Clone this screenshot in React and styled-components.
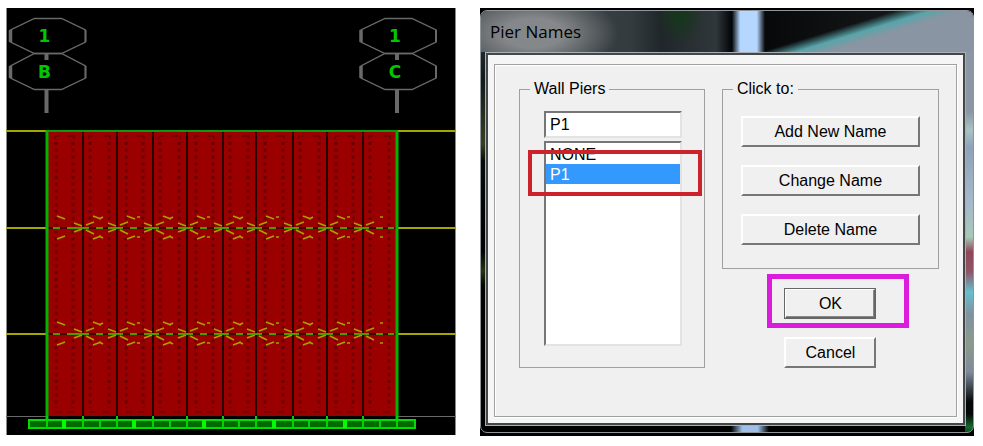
import { useState } from 'react';
import styled, { createGlobalStyle, css } from 'styled-components';

const columns = [47, 83, 117, 153, 187, 223, 256, 293, 327, 363, 397];
const levels = [228, 334];
const baseTicks = [47, 83, 100, 117, 153, 170, 187, 223, 239, 256, 293, 309, 327, 363, 380, 397];
const baseNodes = [64, 134, 204, 274, 345];

function GridBubble({ x, number, letter }) {
	return (
		<g transform={`translate(${x} 0)`}>
			<g fill="none" stroke="#696969" strokeWidth="1.3">
				<path d="M-12 18.5H15L39 30V42L15 53.5H-12L-36 42V30Z" />
				<path d="M-12 53.5H15L39 66V78L15 89.5H-12L-36 78V66Z" />
				<path d="M-36 30V42M-36 66V78" strokeWidth="3.5" />
				<path d="M39 30V42M39 66V78" strokeWidth="2" />
				<path d="M0 54V60M0 89V113" strokeWidth="4" />
			</g>
			<BubbleText x="-2" y="42">
				{number}
			</BubbleText>
			<BubbleText x="-2" y="78">
				{letter}
			</BubbleText>
		</g>
	);
}

function WallColumn({ left, right, index }) {
	const even = index % 2 === 0;
	const dotsLeft = left + (even ? 9 : 7);
	const dotsRight = right - (even ? 10 : 8);
	return (
		<g>
			<rect x={left + 1} y="131" width={right - left - 2} height="285" fill="#9a0000" />
			<path
				d={`M${dotsLeft} 142V408M${dotsRight} 142V408`}
				stroke="#6c0000"
				strokeWidth="3"
				strokeDasharray="3 3.8"
			/>
			<path
				d={`M${dotsLeft - 1} 139V136H${dotsLeft + 3}M${dotsRight - 6} 136H${dotsRight + 1}V139M${dotsLeft - 1} 412H${dotsLeft + 6}M${dotsRight - 6} 412H${dotsRight + 1}`}
				stroke="#6c0000"
				strokeWidth="1.5"
				fill="none"
			/>
		</g>
	);
}

function LevelMarks({ left, right, index, y }) {
	const first = index === 0;
	const last = index === columns.length - 2;
	const peak = left + 10;
	let marks = '';
	if (!first) {
		marks += `M${left + 3} ${y - 3}L${left + 11} ${y - 6}M${left + 3} ${y + 2}L${left + 11} ${y + 6}`;
	}
	if (!last) {
		marks += `M${right - 9} ${y - 5}L${right - 1} ${y - 2}M${right - 9} ${y + 4}L${right - 1} ${y + 1}`;
		marks += `M${peak} ${y - 12}L${peak + 8} ${y - 9}M${peak} ${y + 11}L${peak + 8} ${y + 8}`;
	}
	if (!first && !last && index % 2 === 1) {
		marks += `M${peak + 6} ${y - 9}L${peak + 10} ${y - 11}M${peak + 6} ${y + 8}L${peak + 10} ${y + 10}`;
	}
	if (last || (!first && !(index % 2))) {
		const dot = last ? left + 17 : peak + 10;
		marks += `M${dot} ${y - 11}h3M${dot} ${y + 9}h3`;
	}
	return <path d={marks} stroke="#a7a000" strokeWidth="1.7" fill="none" />;
}

function Elevation() {
	const spans = columns.slice(0, -1).map((left, i) => ({ left, right: columns[i + 1] }));
	return (
		<Plot viewBox="6 8 450 427" role="img" aria-label="Wall elevation">
			<rect x="6" y="8" width="450" height="427" fill="#000" />
			<path d="M6.5 435V8M455.5 8V435" stroke="#8a8a8a" />
			<GridBubble x={46.5} number="1" letter="B" />
			<GridBubble x={397} number="1" letter="C" />
			<rect x="47" y="131" width="350" height="285" fill="#270000" />
			{spans.map((span, i) => (
				<WallColumn key={span.left} {...span} index={i} />
			))}
			{levels.map((y) => (
				<g key={y}>
					<path d={`M47 ${y}H397`} stroke="#450000" strokeWidth="2" />
					<path d={`M6 ${y}H47M397 ${y}H456`} stroke="#a5a500" strokeWidth="2" />
					{spans.map(({ left, right }, i) => (
						<g key={left}>
							<path
								d={`M${left - (i ? 3 : -6)} ${y}H${left + (i ? 6 : 13)}M${left + (i ? 13 : 20)} ${y}h7M${right - 9} ${y}h6`}
								stroke="#4a9a00"
								strokeWidth="2"
							/>
							<LevelMarks left={left} right={right} index={i} y={y} />
						</g>
					))}
				</g>
			))}
			<path d="M6 131H47M397 131H456" stroke="#a5a500" strokeWidth="2" />
			<path d="M6 416.5H47M397 416.5H456" stroke="#696969" />
			<path d="M47 420V131H397V420" stroke="#0a9c0a" strokeWidth="2" fill="none" />
			<path d="M47 420V131M397 131V420" stroke="#00b400" strokeWidth="3" />
			<rect x="29" y="420" width="386" height="8" fill="#006c00" stroke="#00dc00" strokeWidth="2" />
			{baseTicks.map((x) => (
				<path key={x} d={`M${x} ${columns.includes(x) ? 416 : 420}V428`} stroke="#00d200" strokeWidth="2" />
			))}
			{baseNodes.map((x) => (
				<path key={x} d={`M${x} 420V428`} stroke="#00ff00" strokeWidth="4" />
			))}
		</Plot>
	);
}

export default function App() {
	const [name, setName] = useState('P1');

	return (
		<>
			<GlobalStyle />
			<Page>
				<Elevation />
				<Dialog role="dialog" aria-labelledby="dialog-title">
					<Glass>
						<TitleBar>
							<Title id="dialog-title">Pier Names</Title>
						</TitleBar>
						<Client>
							<Frame>
								<PierGroup>
									<Legend>Wall Piers</Legend>
									<NameInput
										aria-label="Pier name"
										value={name}
										onChange={(e) => setName(e.target.value)}
									/>
									<ListHolder>
										<NameList
											size="10"
											aria-label="Wall piers"
											defaultValue="P1"
											onChange={(e) => setName(e.target.value)}>
											<option>NONE</option>
											<option>P1</option>
										</NameList>
										<RedMark />
									</ListHolder>
								</PierGroup>
								<Side>
									<ActionGroup>
										<Legend>Click to:</Legend>
										<Button>Add New Name</Button>
										<Button>Change Name</Button>
										<Button>Delete Name</Button>
									</ActionGroup>
									<Closers>
										<ButtonHolder>
											<Button $default>OK</Button>
											<PinkMark />
										</ButtonHolder>
										<Button>Cancel</Button>
									</Closers>
								</Side>
							</Frame>
						</Client>
					</Glass>
				</Dialog>
			</Page>
		</>
	);
}

const GlobalStyle = createGlobalStyle`
	* {
		box-sizing: border-box;
	}
	body {
		margin: 0;
		background: #fff;
		color: #000;
		font-family: 'Liberation Sans', Arial, sans-serif;
		font-size: 16px;
	}
`;

const Page = styled.main`
	display: grid;
	grid-template-columns: 450fr 494fr;
	gap: 24px;
	align-items: start;
	padding: 8px 9px 9px 6px;

	@media (max-width: 800px) {
		grid-template-columns: 1fr;
	}
`;

const Plot = styled.svg`
	display: block;
	width: 100%;
`;

const BubbleText = styled.text`
	fill: #00c800;
	font-family: 'DejaVu Sans', sans-serif;
	font-size: 17px;
	font-weight: 700;
	text-anchor: middle;
`;

const Dialog = styled.section`
	background: #000;
	padding: 2px 0 3px;
`;

const Glass = styled.div`
	border: 1px solid #90979c;
	border-radius: 7px;
	padding: 0 8px 7px 5px;
	background:
		linear-gradient(
				#8b97a5 60px,
				#a9c3c4 78px,
				#8fa3b8 95px,
				#a5b8cc 150px,
				#a8c9b8 185px,
				#8e4656 200px,
				#8e5667 220px,
				#66c0cf 240px,
				#8192a0 262px,
				#8a9a8c 292px,
				#7e8b9a 320px,
				#050708 350px,
				#050708 362px,
				#136a2c 375px,
				#000 392px
			)
			right 41px / 8px 100% no-repeat,
		linear-gradient(90deg, transparent, #9fbfe6 30%, #9fbfe6 70%, transparent) 250px 100% / 38px 8px no-repeat,
		linear-gradient(#30383c, #14191b 70px, #374020 133px, #07090a 150px, #000 240px, #28330f 260px, #000 275px);
`;

const TitleBar = styled.header`
	display: flex;
	align-items: center;
	height: 41px;
	margin: 0 -8px 0 -5px;
	padding: 0 9px;
	border-radius: 6px 6px 0 0;
	background:
		linear-gradient(163deg, transparent 40%, #58a5aa 50%, #8995a2 59%) right / 220px 100% no-repeat,
		linear-gradient(90deg, transparent, #b5d6ff 25%, #b5d6ff 75%, transparent) 251px 0 / 33px 100% no-repeat,
		radial-gradient(ellipse 24px 28px at 199px 4px, #14381a, transparent),
		radial-gradient(ellipse 85px 42px at 52px 22px, #85888a 35%, transparent),
		linear-gradient(90deg, #454b4f, #343b3f 150px, #202629 180px, #30373b 235px, #050709 250px, #08090a 290px, #1c2022);
`;

const Title = styled.h1`
	margin: 0;
	font-family: 'Open Sans', sans-serif;
	font-size: 17px;
	font-weight: 400;
	line-height: 24px;
`;

const Client = styled.div`
	outline: 1px solid #a9afb2;
	margin-top: 1px;
	border: 2px solid #42474a;
	padding: 9px 6px 6px;
	background: #f5f5f5;
`;

const Frame = styled.div`
	display: grid;
	grid-template-columns: 185fr 216fr;
	gap: 17px;
	align-items: start;
	padding: 14px 17px 48px 24px;
	border: 1px solid #a0a0a0;
	box-shadow: inset 1px 1px #fff, 1px 1px #fff;
	background: #f0f0f0;
`;

const Group = styled.fieldset`
	display: flex;
	flex-direction: column;
	min-width: 0;
	margin: 0;
	border: 1px solid #a0a0a0;
`;

const PierGroup = styled(Group)`
	gap: 3px;
	padding: 12px 22px 21px 24px;
`;

const ActionGroup = styled(Group)`
	gap: 18px;
	padding: 17px 18px 23px;
`;

const Legend = styled.legend`
	margin-left: -14px;
	padding: 0 4px;
	line-height: 20px;

	${ActionGroup} & {
		margin-left: -8px;
	}
`;

const sunken = css`
	border: 2px solid;
	border-color: #767676 #e3e3e3 #e3e3e3 #767676;
	border-radius: 0;
	background: #fff;
	color: #000;
	font: inherit;
	outline: none;
`;

const NameInput = styled.input`
	${sunken}
	width: 100%;
	height: 27px;
	padding: 0 4px;
`;

const ListHolder = styled.div`
	position: relative;
`;

const NameList = styled.select`
	${sunken}
	display: block;
	width: 100%;
	height: 205px;
	padding: 1px 0 0;
	overflow: hidden;

	option {
		min-height: 20px;
		padding: 2px 4px 0;
		line-height: 18px;
	}
	option:checked {
		background: #3399ff linear-gradient(#3399ff, #3399ff);
		color: #fff;
	}
`;

const RedMark = styled.span`
	position: absolute;
	top: 9px;
	left: -16px;
	right: -20px;
	height: 46px;
	border: 4px solid #cc2229;
	pointer-events: none;
`;

const Side = styled.div`
	display: flex;
	flex-direction: column;
	gap: 19px;
`;

const Button = styled.button`
	height: 31px;
	padding: 0;
	border: 2px solid;
	border-color: #fff #777 #777 #fff;
	border-radius: 0;
	background: #f0f0f0;
	color: #000;
	font: inherit;
	cursor: pointer;

	${(props) =>
		props.$default &&
		css`
			border-color: #fff #666 #666 #fff;
			box-shadow: inset -1px -1px #888;
			outline: 1px solid #666;
			outline-offset: -1px;
		`}

	&:active {
		border-color: #777 #fff #fff #777;
	}
`;

const Closers = styled.div`
	display: flex;
	flex-direction: column;
	align-items: center;
	gap: 18px;

	button {
		display: block;
		width: 92px;
	}
`;

const ButtonHolder = styled.div`
	position: relative;
`;

const PinkMark = styled.span`
	position: absolute;
	top: -14px;
	right: -33px;
	bottom: -9px;
	left: -17px;
	border: 5px solid #dc1cdc;
	pointer-events: none;
`;
